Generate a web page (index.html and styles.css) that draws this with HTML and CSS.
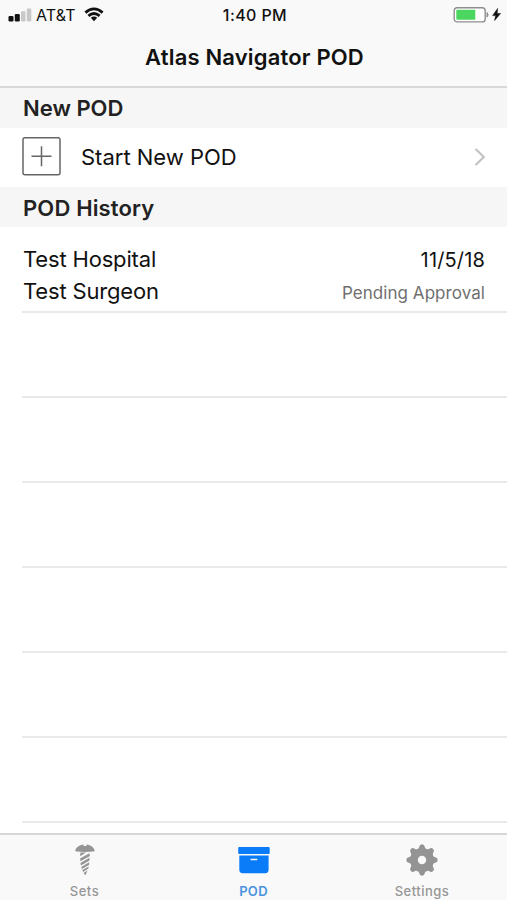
FILE: index.html
```html
<!DOCTYPE html>
<html lang="en">
<head>
<meta charset="utf-8">
<title>Atlas Navigator POD</title>
<link rel="stylesheet" href="styles.css">
</head>
<body>
<div class="app">
  <header class="top">
    <div class="status">
      <div class="carrier">
        <svg class="signal" width="24" height="16" viewBox="0 0 24 16"><rect x="0.5" y="9" width="5" height="5.5" rx="1.2" fill="#111"/><rect x="6.8" y="7" width="5" height="7.5" rx="1.2" fill="#111"/><rect x="13" y="4.3" width="4.5" height="10.2" rx="1.2" fill="#c8c8c8"/><rect x="18.8" y="1.5" width="4.5" height="13" rx="1.2" fill="#c8c8c8"/></svg>
        <span class="carrier-name">AT&amp;T</span>
        <svg class="wifi" width="20" height="15" viewBox="0 0 20 15" fill="none" stroke="#111" stroke-width="2.8"><path d="M1.4 5.6Q10-1.9 18.6 5.6"/><path d="M4.4 8.9Q10 4 15.6 8.9"/><path d="M6.8 10.8Q10 8.2 13.2 10.8L10 14.2z" fill="#111" stroke="none"/></svg>
      </div>
      <span class="time">1:40 PM</span>
      <div class="power">
        <svg width="48" height="18" viewBox="0 0 48 18"><rect x="1.2" y="1.7" width="31" height="14.2" rx="3" fill="#fff" stroke="#8e8e8e" stroke-width="1.4"/><rect x="3.3" y="3.8" width="19" height="10" rx=".8" fill="#4bd75f"/><path d="M34 6.5Q36.4 8.8 34 11.1z" fill="#8e8e8e" stroke="#8e8e8e"/><path d="M44.6 2.4L39.6 9.6H42.6L41.6 14.6L47.6 7.4H44.2z" fill="#111" stroke="#111" stroke-width=".5"/></svg>
      </div>
    </div>
    <h1 class="title">Atlas Navigator POD</h1>
  </header>
  <main class="content">
    <h2 class="section">New POD</h2>
    <div class="start">
      <svg class="plus" width="40" height="40" viewBox="0 0 40 40" fill="none" stroke="#666" stroke-width="1.5"><rect x="1" y="0.7" width="37" height="37" rx="2"/><path d="M9.5 19.2H29.5M19.5 9.2V29.2"/></svg>
      <span class="start-label">Start New POD</span>
      <svg class="chevron" width="12" height="18" viewBox="0 0 12 18" fill="none" stroke="#c3c3c6" stroke-width="2.2"><path d="M1.6 1L9.8 9L1.6 17"/></svg>
    </div>
    <h2 class="section history">POD History</h2>
    <div class="row first">
      <div class="line"><span class="place">Test Hospital</span><span class="date">11/5/18</span></div>
      <div class="line"><span class="surgeon">Test Surgeon</span><span class="state">Pending Approval</span></div>
    </div>
    <div class="row"></div>
    <div class="row"></div>
    <div class="row"></div>
    <div class="row"></div>
    <div class="row"></div>
    <div class="row"></div>
  </main>
  <nav class="tabs">
    <div class="tab">
      <svg width="34" height="34" viewBox="0 0 34 34" fill="#949494"><path d="M7.2 8.2C7.5 4.8 11 1.9 15.4 1.4L15.6 2.9H18.4L18.6 1.4C23 1.9 26.5 4.8 26.8 8.2Q17 9.6 7.2 8.2z"/><path d="M12.4 9.6H18L12.2 13.2z"/><path d="M21.4 10.2L21.9 12.9L12.5 18.2L12.1 15.5z"/><path d="M21.4 14.8L21.5 17.5L12.9 22.6L12.5 19.9z"/><path d="M21 19.3L21.2 21.8L13.9 26.1L13.3 23.9z"/><path d="M20.6 23.4L20.4 25.6L15 29L14.4 27z"/><path d="M19.6 27.4L17.4 32.2L15.5 29.9z"/></svg>
      <span class="tab-label sets">Sets</span>
    </div>
    <div class="tab active">
      <svg width="34" height="34" viewBox="0 0 34 34" fill="#0a7cf8"><rect x="1.2" y="4" width="31.5" height="7" rx="1"/><path fill-rule="evenodd" d="M2.3 12.4H31.6V26.8Q31.6 30.2 28.2 30.2H5.7Q2.3 30.2 2.3 26.8zM13.6 15.7V17.2H20.3V15.7z"/></svg>
      <span class="tab-label pod">POD</span>
    </div>
    <div class="tab">
      <svg width="34" height="34" viewBox="0 0 34 34"><g fill="#949494"><circle cx="17" cy="17" r="12"/><g id="teeth"><path id="tooth" d="M11 8Q13.8 6.4 14.2 3.9Q14.5 1.3 17 1.3T19.8 3.9Q20.2 6.4 23 8z"/><use href="#tooth" transform="rotate(45 17 17)"/><use href="#tooth" transform="rotate(90 17 17)"/><use href="#tooth" transform="rotate(135 17 17)"/></g><use href="#teeth" transform="rotate(180 17 17)"/></g><circle cx="17" cy="17" r="4.2" fill="#f9f9f9"/></svg>
      <span class="tab-label settings">Settings</span>
    </div>
  </nav>
</div>
</body>
</html>
```
FILE: styles.css
```css
* { box-sizing: border-box; }
body { margin: 0; background: #fff; color: #111; font-family: Inter, "Liberation Sans", sans-serif; }
svg { display: block; flex: none; }
.app { display: flex; flex-direction: column; height: 900px; overflow: hidden; }
.top { flex: none; height: 88px; background: #f9f9f9; border-bottom: 2px solid #d8d8d8; }
.status { display: grid; grid-template-columns: 1fr auto 1fr; align-items: center; height: 29px; padding: 0 6px 0 8px; }
.carrier { display: flex; align-items: center; }
.carrier-name { margin-left: 4px; width: 48px; font-size: 16px; line-height: 20px; letter-spacing: .1px; }
.time { padding-left: 1px; font-size: 16px; line-height: 20px; font-weight: 500; letter-spacing: .4px; }
.power { display: flex; justify-content: flex-end; }
.title { margin: 0; padding: 14px 0 0 2px; font-size: 22px; line-height: 28px; font-weight: 600; letter-spacing: .17px; text-align: center; }
.content { flex: 1; min-height: 0; overflow: hidden; }
.section { margin: 0; height: 40px; padding-left: 23px; background: #f6f6f6; color: #222; font-size: 22px; line-height: 40px; font-weight: 600; }
.history { line-height: 42px; letter-spacing: .15px; }
.start { display: flex; align-items: center; height: 59px; padding: 0 21px 2px 22px; }
.start-label { flex: 1; margin-left: 19px; font-size: 22px; line-height: 28px; }
.row { height: 85px; margin-left: 22px; border-bottom: 2px solid #e9e9e9; }
.first { height: 86px; padding: 16px 22px 0 1px; }
.line { display: flex; justify-content: space-between; align-items: center; height: 32px; font-size: 22px; line-height: 32px; letter-spacing: -.17px; }
.date { padding-top: 1px; font-size: 20px; letter-spacing: .15px; }
.state { padding-top: 3px; color: #707070; font-size: 17px; letter-spacing: .06px; }
.tabs { flex: none; display: grid; grid-template-columns: 1fr 1fr 1fr; height: 67px; background: #f9f9f9; border-top: 2px solid #d6d6d6; }
.tab { display: flex; flex-direction: column; align-items: center; padding-top: 8px; color: #969696; }
.tab:last-child { padding-right: 1px; }
.tab-label { margin-top: 5px; font-size: 13px; line-height: 18px; font-weight: 500; letter-spacing: .5px; }
.active { color: #4a94de; }
.pod { font-weight: 600; letter-spacing: .3px; }
```
